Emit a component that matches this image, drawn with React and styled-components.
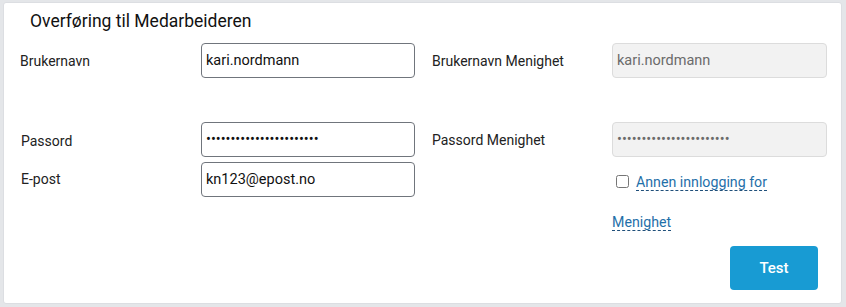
import styled, { createGlobalStyle } from "styled-components";

const GlobalStyle = createGlobalStyle`
  html, body {
    margin: 0;
    padding: 0;
    background-color: #e4e6e9;
  }
  body {
    font-family: Roboto, "Liberation Sans", Arial, sans-serif;
    color: #222;
  }
`;

export default function App() {
    return (
        <>
            <GlobalStyle />
            <Page>
                <Card>
                    <Title>Overføring til Medarbeideren</Title>

                    <Row>
                        <Label $left={-1}>Brukernavn</Label>
                        <Input type="text" defaultValue="kari.nordmann" />
                        <Label $right>Brukernavn Menighet</Label>
                        <Input type="text" defaultValue="kari.nordmann" disabled />
                    </Row>

                    <Row $mt={44}>
                        <Label $nudge={2}>Passord</Label>
                        <Input type="password" defaultValue="hemmeligpassord12345678" />
                        <Label $right>Passord Menighet</Label>
                        <Input type="password" defaultValue="hemmeligpassord12345678" disabled />
                    </Row>

                    <Row $mt={5} $top>
                        <Label $fixed>E-post</Label>
                        <Input type="text" defaultValue="kn123@epost.no" />
                        <span />
                        <CheckLine>
                            <Checkbox type="checkbox" />
                            <LinkText>Annen innlogging for</LinkText> <LinkText>Menighet</LinkText>
                        </CheckLine>
                    </Row>

                    <Footer>
                        <TestButton>Test</TestButton>
                    </Footer>
                </Card>
            </Page>
        </>
    )
}

const Page = styled.div`
  padding: 2px 4px 3px 3px;
`;

const Card = styled.div`
  box-sizing: border-box;
  width: 839px;
  height: 302px;
  background-color: #ffffff;
  border: 1px solid #dcdee2;
  border-radius: 3px;
  padding: 8px 15px 0 16px;
`;

const Title = styled.h2`
  margin: 0 0 11px 10px;
  font-size: 17.5px;
  font-weight: 400;
  line-height: 21px;
  color: #111;
`;

const Row = styled.div`
  display: grid;
  grid-template-columns: 180px 214px 197px 215px;
  align-items: ${props => props.$top ? "start" : "center"};
  margin-top: ${props => props.$mt || 0}px;
  padding-left: 1px;
`;

const Label = styled.label`
  font-size: 14px;
  color: #222;
  padding-left: ${props => props.$right ? "17px" : "0"};
  margin-left: ${props => props.$left || 0}px;
  margin-top: ${props => props.$nudge || 0}px;
  line-height: ${props => props.$fixed ? "35px" : "normal"};
`;

const Input = styled.input`
  box-sizing: border-box;
  width: 100%;
  height: 35px;
  margin: 0;
  padding: 0 4px;
  font-family: Roboto, "Liberation Sans", Arial, sans-serif;
  font-size: 14.5px;
  color: #111;
  background-color: #fff;
  border: 1px solid #70757c;
  border-radius: 4px;
  outline: none;

  &:disabled {
    background-color: #f2f2f2;
    border-color: #dcdcdc;
    color: #6b6b6b;
  }
`;

const CheckLine = styled.div`
  font-size: 14.2px;
  line-height: 40px;
  color: #1f6fa8;
`;

const Checkbox = styled.input`
  margin: 0 7px 0 4px;
  width: 13px;
  height: 13px;
  vertical-align: -1px;
`;

const LinkText = styled.span`
  color: #1f70a9;
  border-bottom: 1px dashed #1f4f7a;
  cursor: pointer;
`;

const Footer = styled.div`
  display: flex;
  justify-content: flex-end;
  padding-right: 8px;
  margin-top: 4px;
`;

const TestButton = styled.button`
  width: 88px;
  height: 44px;
  border: none;
  border-radius: 4px;
  background-color: #189bd3;
  color: #fff;
  font-family: Roboto, "Liberation Sans", Arial, sans-serif;
  font-size: 15px;
  font-weight: 500;
  cursor: pointer;
`;
